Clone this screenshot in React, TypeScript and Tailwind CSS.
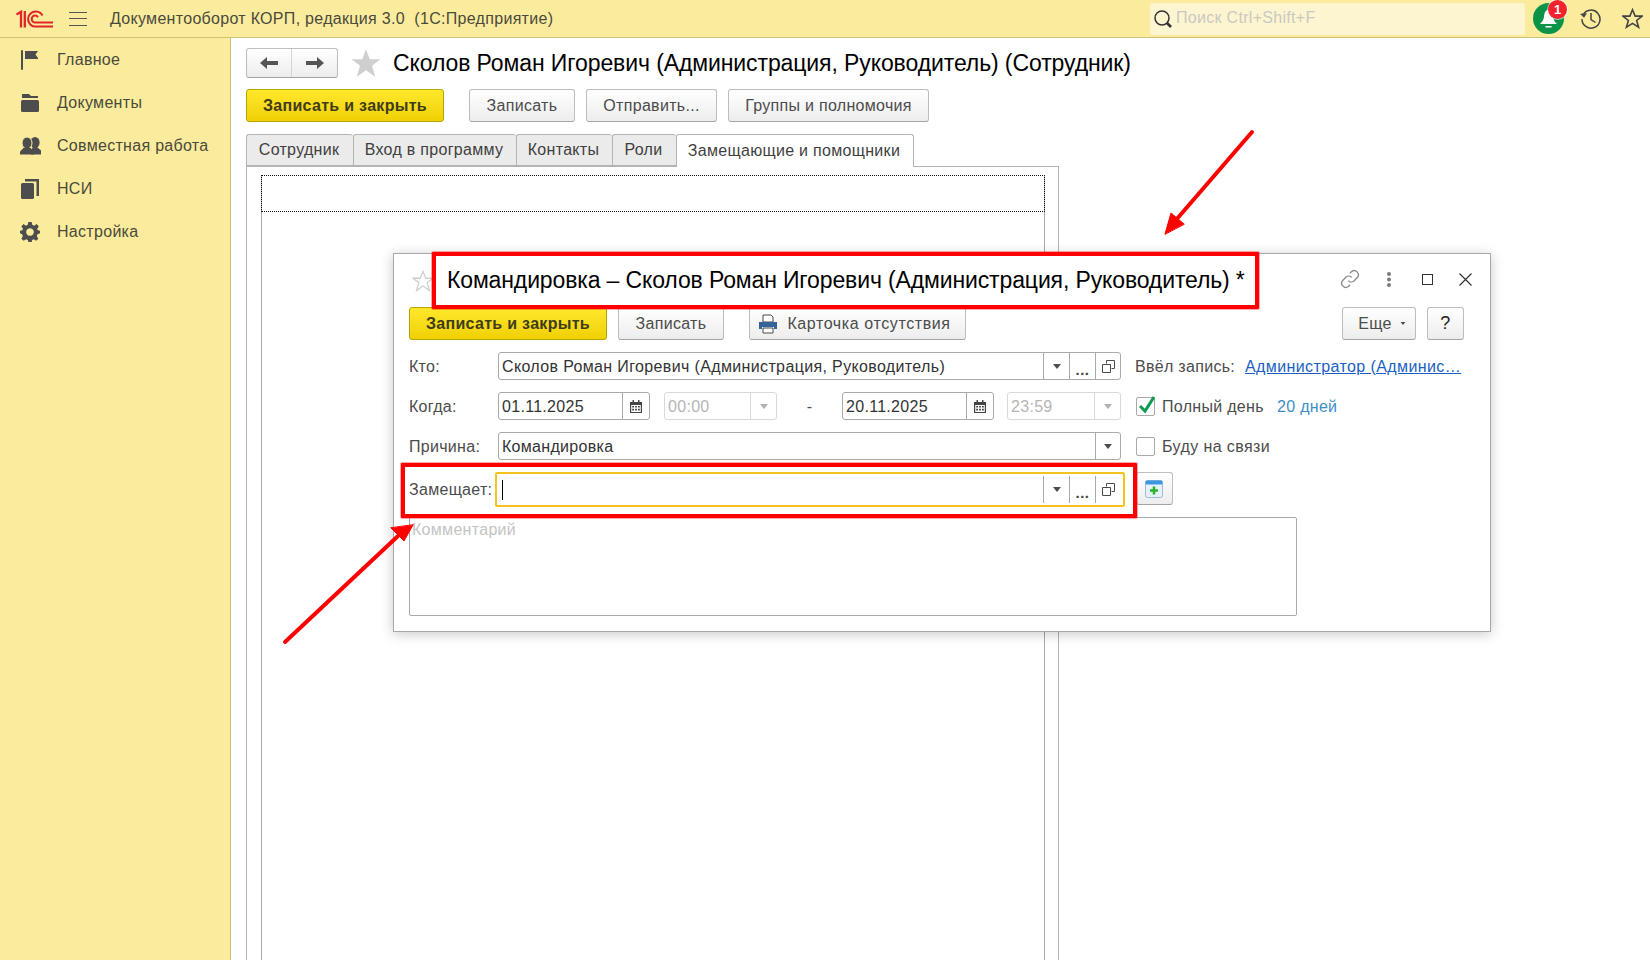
import React from 'react';

const Logo = () => (
  <svg width="37" height="18" viewBox="0 0 37 18" fill="none" stroke="#e0252b">
    <path d="M0.5 4.5 L5 1.8 V17.5 M8.8 1 V17.5" strokeWidth="2.3" />
    <path d="M37 16.6 H19 A7.6 7.6 0 1 1 26.5 5.5" strokeWidth="2" />
    <path d="M37 12.4 H19 A3.4 3.4 0 1 1 22 7.2" strokeWidth="2" />
  </svg>
);

const FlagIcon = () => (
  <svg width="20" height="20" viewBox="0 0 20 20" fill="#4d4d4d">
    <rect x="1" y="0" width="2" height="20" rx="1" />
    <path d="M5 1 H18 L15.5 4.5 L18 8 V9 H5 Z" />
  </svg>
);
const FolderIcon = () => (
  <svg width="20" height="20" viewBox="0 0 20 20" fill="#4d4d4d">
    <path d="M2 1 H9 L11 3 H18 V5 H2 Z" />
    <rect x="1" y="7" width="18" height="12" rx="1.5" />
  </svg>
);
const UsersIcon = () => (
  <svg width="21" height="18" viewBox="0 0 21 18" fill="#4d4d4d">
    <ellipse cx="15" cy="5.5" rx="4.6" ry="5.5" />
    <path d="M11 17.5 V13 L13 10 H17 L21 13.5 V17.5 Z" />
    <ellipse cx="7" cy="6" rx="5" ry="6" stroke="#fbec9d" strokeWidth="1" />
    <path d="M0 17.5 V14.5 L3.5 11 H10.5 L14 14.5 V17.5 Z" />
  </svg>
);
const CopyBooksIcon = () => (
  <svg width="20" height="20" viewBox="0 0 20 20" fill="#4d4d4d">
    <rect x="1" y="4" width="13" height="16" rx="1.5" />
    <path d="M5 0 H19 V17 H16.5 V2.5 H5 Z" />
  </svg>
);
const GearIcon = () => (
  <svg width="20" height="20" viewBox="0 0 24 24" fill="#4d4d4d">
    <path fillRule="evenodd" d="M10 0 H14 L14.7 3.4 L17 4.4 L20 2.5 L22.6 5.4 L20.6 8.2 L21.4 10 L24 10.6 V13.6 L21 14.8 L20.2 17 L22 20 L19.4 22.6 L16.6 20.8 L14.6 21.6 L14 24 H10 L9.4 21.6 L7.2 20.8 L4.4 22.6 L1.6 20 L3.4 17 L2.6 14.8 L0 13.6 V10.6 L2.8 10 L3.6 8.2 L1.6 5.4 L4.2 2.5 L7 4.4 L9.3 3.4 Z M12 7.4 A4.6 4.6 0 1 0 12.01 7.4 Z" />
  </svg>
);

const Caret = ({ color = '#4d4d4d', size = 8 }: { color?: string; size?: number }) => (
  <svg width={size} height={size - 3} viewBox="0 0 8 5">
    <path d="M0 0 H8 L4 5 Z" fill={color} />
  </svg>
);

const CalendarIcon = () => (
  <svg width="12" height="13" viewBox="0 0 12 13" fill="#444">
    <path fillRule="evenodd" d="M0 2 H2.5 V0 H4 V2 H8 V0 H9.5 V2 H12 V13 H0 Z M1.2 5 V12 H10.8 V5 Z" />
    <path d="M2.2 6 H4 V7.6 H2.2 Z M5.1 6 H6.9 V7.6 H5.1 Z M8 6 H9.8 V7.6 H8 Z M2.2 8.8 H4 V10.6 H2.2 Z M5.1 8.8 H6.9 V10.6 H5.1 Z M8 8.8 H9.8 V10.6 H8 Z" />
  </svg>
);

const OpenIcon = () => (
  <svg width="13" height="13" viewBox="0 0 13 13" fill="none" stroke="#4a4a4a">
    <path d="M4.5 3.5 V0.5 H12.5 V8.5 H9.5" />
    <path d="M0.5 4.5 H8.5 V12.5 H0.5 Z" fill="none" />
  </svg>
);

const Btn = ({ className = '', children }: { className?: string; children: React.ReactNode }) => (
  <div className={`flex h-[33px] shrink-0 items-center justify-center rounded-[3px] border border-[#bdbdbd] border-b-[#a4a4a4] bg-linear-to-b from-white to-[#ededed] text-[16px] text-[#4c4c4c] ${className}`}>
    {children}
  </div>
);

const YellowBtn = ({ className = '' }: { className?: string }) => (
  <div className={`flex h-[33px] shrink-0 items-center justify-center rounded-[3px] border border-[#b9a300] bg-linear-to-b from-[#ffe82a] to-[#f0d000] text-[16px] font-bold text-[#403c1a] ${className}`}>
    Записать и закрыть
  </div>
);

const Sep = ({ className = 'bg-[#a9a9a9]' }: { className?: string }) => <div className={`h-full w-px shrink-0 ${className}`} />;

const Cell = ({ children, w = 'w-[25px]' }: { children: React.ReactNode; w?: string }) => (
  <>
    <Sep />
    <div className={`flex h-full shrink-0 items-center justify-center ${w}`}>{children}</div>
  </>
);

const Dots = () => <span className="mt-[6px] text-[15px] font-bold leading-none tracking-[0.5px] text-[#444]">...</span>;

const Label = ({ children }: { children: React.ReactNode }) => (
  <div className="w-[89px] shrink-0 pt-[2px] text-[16px] text-[#4c4c4c]">{children}</div>
);

const box = 'flex h-[28px] shrink-0 items-center rounded-[3px] border border-[#a9a9a9] bg-white text-[16px] text-[#333]';
const boxOff = 'flex h-[28px] shrink-0 items-center rounded-[3px] border border-[#d9d9d9] bg-white text-[16px] text-[#b5b5b5]';

const sideItems = [
  { icon: <FlagIcon />, label: 'Главное' },
  { icon: <FolderIcon />, label: 'Документы' },
  { icon: <UsersIcon />, label: 'Совместная работа' },
  { icon: <CopyBooksIcon />, label: 'НСИ' },
  { icon: <GearIcon />, label: 'Настройка' },
];

const tabs = [
  { label: 'Сотрудник', w: 'w-[107px]' },
  { label: 'Вход в программу', w: 'w-[163px]' },
  { label: 'Контакты', w: 'w-[96px]' },
  { label: 'Роли', w: 'w-[64px]' },
];

const Modal = () => (
  <div className="absolute left-[393px] top-[253px] h-[379px] w-[1098px] border border-[#a8a8a8] bg-white pl-[15px] shadow-[0_2px_12px_rgba(0,0,0,0.22)]">
    {/* title */}
    <div className="flex h-[53px] items-center">
      <svg className="ml-[3px] mt-[1px] shrink-0" width="22" height="22" viewBox="0 0 24 24" fill="none" stroke="#cfcfcf" strokeWidth="1.4">
        <path d="M12 1.5 L15 9 H23 L16.6 14 L19 22.5 L12 17.5 L5 22.5 L7.4 14 L1 9 H9 Z" />
      </svg>
      <div className="ml-[13px] whitespace-nowrap text-[23px] leading-none tracking-[-0.13px] text-black">
        Командировка – Сколов Роман Игоревич (Администрация, Руководитель) *
      </div>
      <div className="ml-auto flex items-center">
        <svg className="absolute left-[946px] top-[15px]" width="20" height="20" viewBox="0 0 24 24" fill="none" stroke="#8a8a8a" strokeWidth="1.6">
          <path d="M10 14 A5 5 0 0 0 17 14 L21 10 A5 5 0 0 0 14 3 L12 5" />
          <path d="M14 10 A5 5 0 0 0 7 10 L3 14 A5 5 0 0 0 10 21 L12 19" />
        </svg>
        <svg className="absolute left-[992px] top-[18px]" width="6" height="15" viewBox="0 0 6 15" fill="#7b7b7b">
          <circle cx="3" cy="2" r="2" />
          <circle cx="3" cy="7.5" r="2" />
          <circle cx="3" cy="13" r="2" />
        </svg>
        <div className="absolute left-[1028px] top-[20px] h-[11px] w-[11px] border-[1.5px] border-[#333]" />
        <svg className="absolute left-[1065px] top-[19px]" width="13" height="13" viewBox="0 0 13 13" stroke="#333" strokeWidth="1.2">
          <path d="M0.5 0.5 L12.5 12.5 M12.5 0.5 L0.5 12.5" />
        </svg>
      </div>
    </div>

    {/* command bar */}
    <div className="flex">
      <YellowBtn className="w-[198px]" />
      <Btn className="ml-[11px] w-[106px]">Записать</Btn>
      <Btn className="ml-[25px] w-[217px] gap-[9px] pr-[6px]">
        <svg width="20" height="20" viewBox="0 0 20 20">
          <path d="M5 1 H13 L15 3 V8 H5 Z" fill="white" stroke="#4a4a4a" />
          <path d="M1 8 H19 V15 H16 V13 H4 V15 H1 Z" fill="#35639a" />
          <path d="M5 14 H15 V19 H5 Z" fill="white" stroke="#4a4a4a" />
        </svg>
        <span className="tracking-[0.6px]">Карточка отсутствия</span>
      </Btn>
      <Btn className="ml-[376px] w-[74px] gap-[8px] pl-[6px]">
        Еще <Caret size={6} />
      </Btn>
      <Btn className="ml-[11px] w-[37px] text-[18px] text-[#222]">?</Btn>
    </div>

    {/* Кто */}
    <div className="mt-[12px] flex items-center">
      <Label>Кто:</Label>
      <div className={`${box} w-[623px]`}>
        <span className="flex-1 pl-[3px] pt-[2px] tracking-[0.36px]">Сколов Роман Игоревич (Администрация, Руководитель)</span>
        <Cell><Caret /></Cell>
        <Cell><Dots /></Cell>
        <Cell w="w-[24px]"><OpenIcon /></Cell>
      </div>
      <div className="ml-[14px] w-[110px] shrink-0 whitespace-nowrap pt-[2px] text-[16px] text-[#4c4c4c]">Ввёл запись:</div>
      <div className="w-[216px] shrink-0 whitespace-nowrap pt-[2px] text-[16px] tracking-[0.4px] text-[#1b5fc4] underline">Администратор (Админис…</div>
    </div>

    {/* Когда */}
    <div className="mt-[12px] flex items-center">
      <Label>Когда:</Label>
      <div className={`${box} w-[152px]`}>
        <span className="flex-1 pl-[3px] pt-[2px]">01.11.2025</span>
        <Cell w="w-[26px]"><CalendarIcon /></Cell>
      </div>
      <div className={`${boxOff} ml-[14px] w-[113px]`}>
        <span className="flex-1 pl-[3px] pt-[2px]">00:00</span>
        <Sep className="bg-[#d9d9d9]" />
        <div className="flex w-[25px] shrink-0 justify-center"><Caret color="#b0b0b0" /></div>
      </div>
      <div className="w-[65px] shrink-0 pt-[2px] text-center text-[16px] text-[#4c4c4c]">-</div>
      <div className={`${box} w-[152px]`}>
        <span className="flex-1 pl-[3px] pt-[2px]">20.11.2025</span>
        <Cell w="w-[26px]"><CalendarIcon /></Cell>
      </div>
      <div className={`${boxOff} ml-[13px] w-[114px]`}>
        <span className="flex-1 pl-[3px] pt-[2px]">23:59</span>
        <Sep className="bg-[#d9d9d9]" />
        <div className="flex w-[25px] shrink-0 justify-center"><Caret color="#b0b0b0" /></div>
      </div>
      <div className="relative ml-[15px] h-[19px] w-[19px] shrink-0 rounded-[2px] border border-[#a9a9a9]">
        <svg className="absolute -top-[3px] left-[1px]" width="19" height="20" viewBox="0 0 19 20" fill="none" stroke="#0f9a50" strokeWidth="3">
          <path d="M2 11 L7 16 L16 2" />
        </svg>
      </div>
      <div className="ml-[7px] w-[115px] shrink-0 whitespace-nowrap pt-[2px] text-[16px] text-[#4c4c4c]">Полный день</div>
      <div className="pt-[2px] text-[16px] text-[#3f8dc4]">20 дней</div>
    </div>

    {/* Причина */}
    <div className="mt-[12px] flex items-center">
      <Label>Причина:</Label>
      <div className={`${box} w-[623px]`}>
        <span className="flex-1 pl-[3px] pt-[2px]">Командировка</span>
        <Cell w="w-[24px]"><Caret /></Cell>
      </div>
      <div className="ml-[15px] h-[19px] w-[19px] shrink-0 rounded-[2px] border border-[#a9a9a9]" />
      <div className="ml-[7px] pt-[2px] text-[16px] tracking-[0.4px] text-[#4c4c4c]">Буду на связи</div>
    </div>

    {/* Замещает */}
    <div className="mt-[12px] flex h-[35px] items-center">
      <div className="w-[86px] shrink-0 whitespace-nowrap text-[16px] text-[#4c4c4c]">Замещает:</div>
      <div className="flex h-[35px] w-[630px] shrink-0 items-center rounded-[2px] border-2 border-[#f6c21c] bg-white py-[2px] pr-[2px]">
        <div className="ml-[5px] h-[20px] w-px bg-black" />
        <div className="flex-1" />
        <Cell><Caret /></Cell>
        <Cell><Dots /></Cell>
        <Cell><OpenIcon /></Cell>
      </div>
      <div className="ml-[11px] flex h-[33px] w-[37px] shrink-0 items-center justify-center self-start rounded-[3px] border border-[#bdbdbd] border-b-[#a4a4a4] bg-linear-to-b from-white to-[#ededed] pr-[1px]">
        <svg width="18" height="18" viewBox="0 0 18 18">
          <rect x="0.5" y="0.5" width="17" height="17" rx="2" fill="#e6f2fb" stroke="#9fb9cf" />
          <rect x="0.5" y="0.5" width="17" height="4" rx="1.5" fill="#3d97e0" />
          <path d="M9 6.5 V14.5 M5 10.5 H13" stroke="#2bb32b" strokeWidth="2.6" />
        </svg>
      </div>
    </div>

    {/* Комментарий */}
    <div className="mt-[10px] h-[99px] w-[888px] rounded-[2px] border border-[#a9a9a9] pl-[2px] text-[16px] text-[#c4c4c4]">
      Комментарий
    </div>
  </div>
);

const Annotations = () => (
  <>
    <div className="absolute left-[432px] top-[252px] h-[57px] w-[827px] rounded-[1px] border-[4px] border-[#ff0000] outline outline-[rgba(255,0,0,0.35)]" />
    <div className="absolute left-[401px] top-[463px] h-[55px] w-[736px] rounded-[1px] border-[4px] border-[#ff0000] outline outline-[rgba(255,0,0,0.35)]" />
    <svg className="pointer-events-none absolute left-0 top-0" width="1650" height="960" fill="#ff0000" stroke="#ff0000" strokeLinecap="round">
      <path d="M1252 132 L1176 220" strokeWidth="4" />
      <path d="M1165 234 L1171 213 L1184 224 Z" strokeWidth="1" />
      <path d="M285 642 L398 536" strokeWidth="4" />
      <path d="M413 525 L404 541 L391 528 Z" strokeWidth="1" />
    </svg>
  </>
);

export default function App() {
  return (
    <div className="relative flex h-[960px] w-[1650px] flex-col overflow-hidden bg-white font-['Liberation_Sans',Arial,sans-serif] tracking-[0.3px]">
      {/* top bar */}
      <header className="flex h-[38px] shrink-0 items-center border-b border-[#cfc176] bg-[#fbec9d] pl-[16px]">
        <Logo />
        <div className="ml-[16px] flex h-[14px] w-[18px] flex-col justify-between">
          <div className="h-px bg-[#555]" />
          <div className="h-px bg-[#555]" />
          <div className="h-px bg-[#555]" />
        </div>
        <div className="ml-[23px] whitespace-pre text-[16px] text-[#4a4a3c]">Документооборот КОРП, редакция 3.0  (1С:Предприятие)</div>
        <div className="ml-auto flex h-[32px] w-[375px] items-center rounded-[3px] bg-[#fdf5cf] pl-[3px]">
          <svg width="20" height="20" viewBox="0 0 20 20" fill="none" stroke="#333">
            <circle cx="9" cy="9" r="7" strokeWidth="1.5" />
            <path d="M14 14 L18 18" strokeWidth="2.6" />
          </svg>
          <span className="ml-[3px] pb-[2px] text-[16px] text-[#c9c9c3]">Поиск Ctrl+Shift+F</span>
        </div>
        <div className="relative ml-[8px] h-[31px] w-[31px] rounded-full bg-[#0b9448]">
          <svg className="absolute left-[5px] top-[6px]" width="21" height="21" viewBox="0 0 21 21" fill="white">
            <path d="M10.5 1 C7 1 6.5 4 6 8 C5.6 11 4 13 2 15 H19 C17 13 15.4 11 15 8 C14.5 4 14 1 10.5 1 Z" />
            <path d="M7.5 17 H13.5 V18.5 H7.5 Z" />
          </svg>
          <div className="absolute left-[15px] top-[-3px] flex h-[19px] w-[19px] items-center justify-center rounded-full bg-[#f3222c] text-[13px] font-bold leading-none tracking-normal text-white ring-1 ring-white/60">1</div>
        </div>
        <svg className="ml-[16px]" width="22" height="22" viewBox="0 0 22 22" fill="none" stroke="#444" strokeWidth="1.5">
          <path d="M3 7 A9 9 0 1 1 2 11" />
          <path d="M0.5 6 L4 9.5 L6.5 5.5 Z" fill="#444" strokeWidth="0.5" />
          <path d="M11 5 V11.5 L15.5 14.5" />
        </svg>
        <svg className="ml-[20px] mr-[7px]" width="21" height="21" viewBox="0 0 24 24" fill="none" stroke="#444" strokeWidth="1.8">
          <path d="M12 2 L15 9.3 H23 L16.7 14.2 L19 22 L12 17.5 L5 22 L7.3 14.2 L1 9.3 H9 Z" />
        </svg>
      </header>

      <div className="flex min-h-0 flex-1">
        {/* sidebar */}
        <aside className="flex w-[231px] shrink-0 flex-col border-r border-[#cfc176] bg-[#fbec9d]">
          {sideItems.map((item) => (
            <div key={item.label} className="flex h-[43px] items-center text-[16px] text-[#4a4a3c]">
              <div className="ml-[20px] flex w-[22px] justify-start">{item.icon}</div>
              <span className="ml-[15px]">{item.label}</span>
            </div>
          ))}
        </aside>

        {/* main form */}
        <main className="flex min-w-0 flex-1 flex-col pl-[15px] pt-[10px]">
          <div className="flex h-[30px] items-center">
            <div className="flex h-[30px] w-[92px] rounded-[3px] border border-[#bdbdbd] border-b-[#a4a4a4] bg-linear-to-b from-white to-[#ededed]">
              <div className="flex w-[45px] items-center justify-center border-r border-[#d4d4d4]">
                <svg width="18" height="12" viewBox="0 0 18 12" fill="#555"><path d="M0 6 L7 0 V4 H18 V8 H7 V12 Z" /></svg>
              </div>
              <div className="flex flex-1 items-center justify-center">
                <svg width="18" height="12" viewBox="0 0 18 12" fill="#555"><path d="M18 6 L11 0 V4 H0 V8 H11 V12 Z" /></svg>
              </div>
            </div>
            <svg className="ml-[12px]" width="32" height="30" viewBox="0 0 24 24" fill="#cfcfcf">
              <path d="M12 1 L15 9 H23.5 L16.8 14.2 L19.4 23 L12 17.8 L4.6 23 L7.2 14.2 L0.5 9 H9 Z" />
            </svg>
            <div className="ml-[11px] whitespace-nowrap text-[23px] leading-none tracking-[-0.1px] text-black">
              Сколов Роман Игоревич (Администрация, Руководитель) (Сотрудник)
            </div>
          </div>

          <div className="mt-[11px] flex">
            <YellowBtn className="w-[198px]" />
            <Btn className="ml-[25px] w-[106px]">Записать</Btn>
            <Btn className="ml-[11px] w-[131px]">Отправить...</Btn>
            <Btn className="ml-[11px] w-[201px]">Группы и полномочия</Btn>
          </div>

          <div className="mt-[12px] flex h-[32px]">
            {tabs.map((t) => (
              <div key={t.label} className={`flex items-center justify-center rounded-t-[3px] border border-r-0 border-[#b4b4b4] bg-[#ebebeb] pr-[2px] text-[16px] text-[#3f3f3f] ${t.w}`}>
                {t.label}
              </div>
            ))}
            <div className="relative z-10 flex h-[33px] w-[238px] items-center justify-center rounded-t-[3px] border border-b-0 border-[#b4b4b4] bg-white pb-[1px] pr-[2px] text-[16px] text-[#3f3f3f]">
              Замещающие и помощники
            </div>
          </div>

          <div className="min-h-0 w-[813px] flex-1 border-x border-t border-[#b4b4b4] pl-[14px] pt-[8px]">
            <div className="h-full w-[784px] border-x border-[#a9a9a9]">
              <div className="-mx-px h-[37px] border border-dotted border-[#111]" />
            </div>
          </div>
        </main>
      </div>

      <Modal />
      <Annotations />
    </div>
  );
}
